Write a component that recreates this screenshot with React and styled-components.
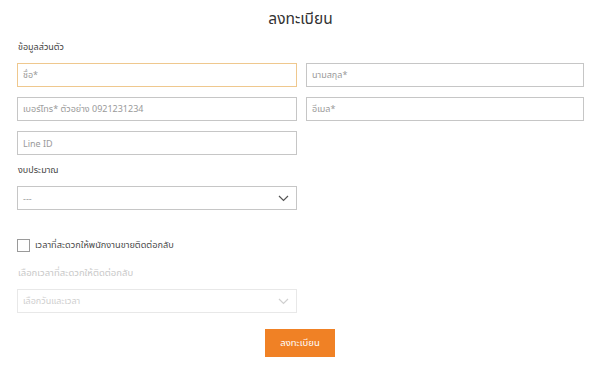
import React from "react";
import styled, { createGlobalStyle } from "styled-components";

const Global = createGlobalStyle`
  html, body { margin: 0; padding: 0; background: #fff; }
  body { font-family: "Noto Sans", "Noto Sans Thai", "DejaVu Sans", sans-serif; }
  * { box-sizing: border-box; }
`;

const Page = styled.form`
  width: 600px;
  padding: 6px 16px 0 17px;
  display: flex;
  flex-direction: column;
`;

const Title = styled.h1`
  margin: 0;
  text-align: center;
  font-size: 15.5px;
  font-weight: 400;
  color: #333;
  line-height: 24px;
`;

const SectionLabel = styled.div`
  font-size: ${(p) => (p.muted ? "9.5px" : "9px")};
  color: ${(p) => (p.muted ? "#c9c9c9" : "#444")};
  line-height: 14px;
  margin: ${(p) => p.m || "0"};
`;

const Grid = styled.div`
  display: grid;
  grid-template-columns: 280px 278px;
  column-gap: 9px;
  row-gap: 10px;
`;

const Input = styled.div`
  height: 24px;
  border: 1px solid ${(p) => (p.focused ? "#efc88e" : p.disabled ? "#e8e8e8" : "#c6c6c6")};
  display: flex;
  align-items: center;
  justify-content: space-between;
  padding: 0 7px 0 5px;
  font-size: 9px;
  color: ${(p) => (p.disabled ? "#cfcfcf" : "#9a9a9a")};
  background: #fff;
`;

const SingleCol = styled.div`
  width: 280px;
`;

const CheckRow = styled.label`
  display: flex;
  align-items: center;
  gap: 5px;
  margin-top: 28px;
  font-size: 9.2px;
  color: #4a4a4a;
`;

const Box = styled.span`
  width: 13px;
  height: 13px;
  border: 1px solid #9a9a9a;
  background: #fff;
  display: inline-block;
`;

const ButtonRow = styled.div`
  display: flex;
  justify-content: center;
  margin-top: 16px;
  padding-right: 1px;
`;

const Submit = styled.button`
  width: 70px;
  height: 28px;
  border: none;
  background: #f08125;
  color: #fff;
  font-family: inherit;
  font-size: 9.5px;
  padding: 0;
`;

const Chevron = ({ color }) => (
  <svg width="11" height="7" viewBox="0 0 11 7">
    <path d="M1 1 L5.5 5.5 L10 1" fill="none" stroke={color} strokeWidth="1.2" />
  </svg>
);

export default function App() {
  return (
    <>
      <Global />
      <Page>
        <Title>ลงทะเบียน</Title>
        <SectionLabel m="10px 0 9px 1px">ข้อมูลส่วนตัว</SectionLabel>
        <Grid>
          <Input focused>ชื่อ*</Input>
          <Input>นามสกุล*</Input>
          <Input>เบอร์โทร* ตัวอย่าง 0921231234</Input>
          <Input>อีเมล*</Input>
          <Input>Line ID</Input>
        </Grid>
        <SectionLabel m="8px 0 9px 1px">งบประมาณ</SectionLabel>
        <SingleCol>
          <Input>
            <span>---</span>
            <Chevron color="#555" />
          </Input>
        </SingleCol>
        <CheckRow>
          <Box />
          เวลาที่สะดวกให้พนักงานขายติดต่อกลับ
        </CheckRow>
        <SectionLabel muted m="14px 0 9px 1px">เลือกเวลาที่สะดวกให้ติดต่อกลับ</SectionLabel>
        <SingleCol>
          <Input disabled>
            <span>เลือกวันและเวลา</span>
            <Chevron color="#d0d0d0" />
          </Input>
        </SingleCol>
        <ButtonRow>
          <Submit type="button">ลงทะเบียน</Submit>
        </ButtonRow>
      </Page>
    </>
  );
}
